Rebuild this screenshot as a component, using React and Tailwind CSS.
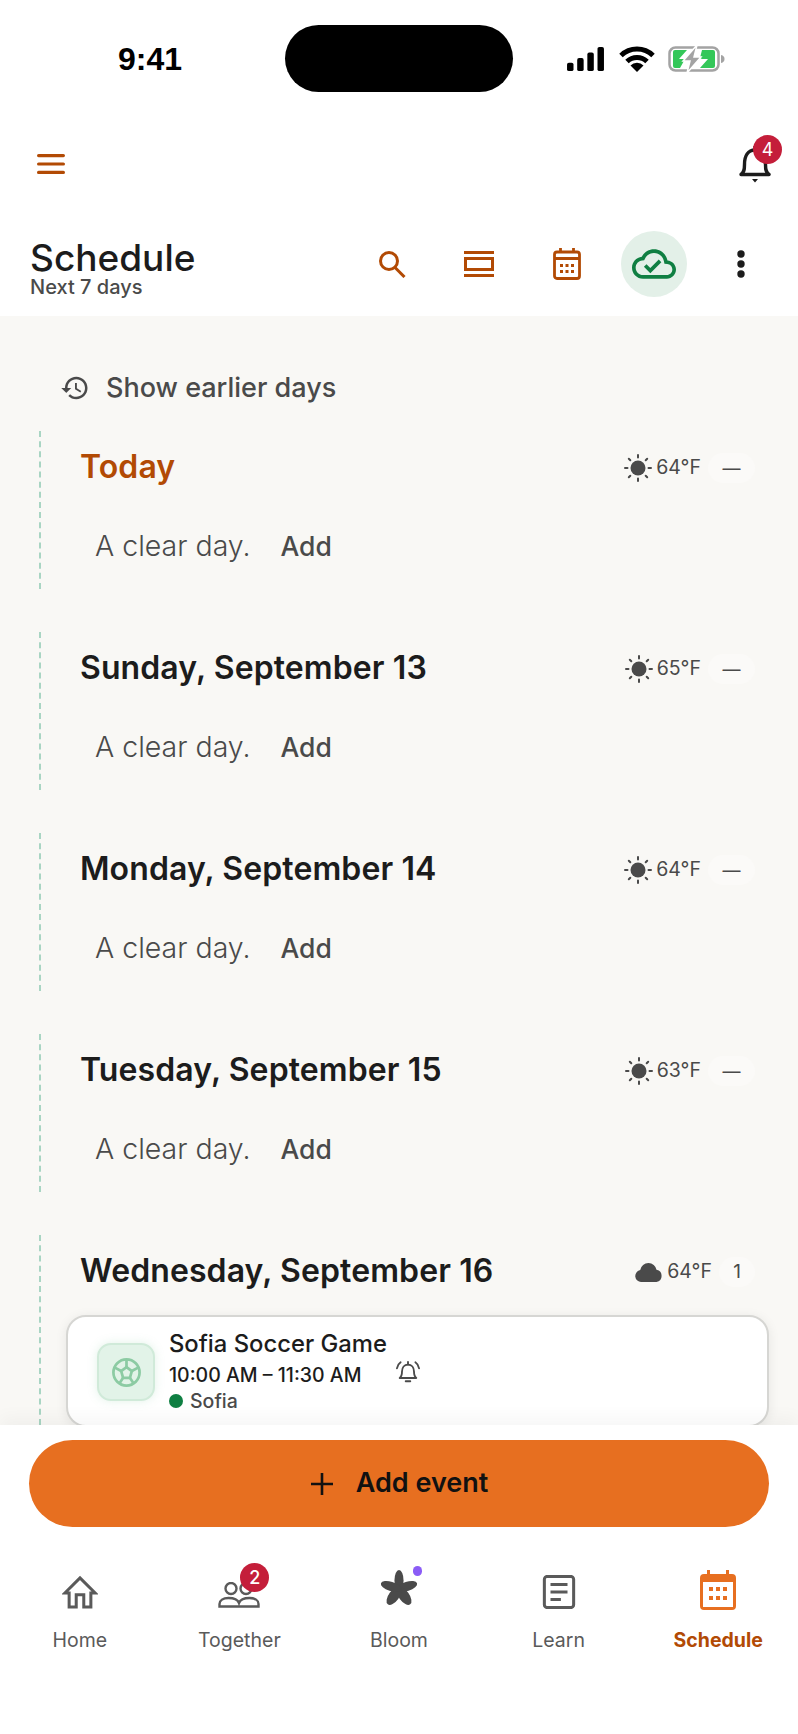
import React from "react";

const Sun = () => (
  <svg viewBox="0 0 28 28" className="w-[28px] h-[28px]" fill="#4a4a4a">
    <circle cx="14" cy="14" r="7.500" />
    <g stroke="#4a4a4a" strokeWidth="2" strokeLinecap="round">
      <path d="M14 1v2.500M14 24.500V27M1 14h2.500M24.500 14H27M4.800 4.800l1.500 1.500M21.700 21.700l1.500 1.500M4.800 23.200l1.500-1.500M21.700 6.300l1.500-1.500" />
    </g>
  </svg>
);

const Cloud = () => (
  <svg viewBox="0 0 28 20" className="w-[29px] h-[20px]" fill="#4a4a4a">
    <path d="M7 20a6 6 0 0 1-1.300-11.900A8.500 8.500 0 0 1 14 1a8.200 8.200 0 0 1 8 6.800A6.200 6.200 0 0 1 22 20Z" />
  </svg>
);

function Day({ title, temp, today }) {
  return (
    <div className="border-l-2 border-dashed border-[#a9d5c3] ml-[39px] mb-[43px] h-[158px] shrink-0 pl-[39px]">
      <div className="flex items-center justify-between h-[70px] pr-[43px]">
        <div className={`text-[32px] font-semibold tracking-[0.1px] mt-[2px] ${today ? "text-[#b24a04]" : "text-[#1c1c1c]"}`}>{title}</div>
        <div className="flex items-center mt-[4px]">
          <Sun />
          <span className="text-[19.500px] text-[#4a4a4a] ml-[4px] mr-[7px]">{temp}</span>
          <span className="h-[30px] w-[47px] rounded-full bg-[#fbfaf8] flex items-center justify-center text-[18px] text-[#4a4a4a]">—</span>
        </div>
      </div>
      <div className="flex items-center mt-[24px] ml-[15px] text-[28.500px] text-[#4a4a4a]">
        <span className="font-light">A clear day.</span>
        <span className="font-medium text-[26.500px] ml-[30px]">Add</span>
      </div>
    </div>
  );
}

function NavItem({ label, active, children }) {
  return (
    <div className="flex-1 flex flex-col items-center">
      <div className="relative h-[48px] w-[60px] flex items-end justify-center">{children}</div>
      <div className={`mt-[14px] text-[19.500px] ${active ? "text-[#b24a04] font-bold" : "text-[#5a5a5a]"}`}>{label}</div>
    </div>
  );
}

export default function App() {
  return (
    <div className="w-[798px] h-[1734px] flex flex-col bg-white overflow-hidden font-['Inter',sans-serif]">
      {/* status bar */}
      <div className="flex items-center h-[92px] pt-[25px] shrink-0 pl-[118px]">
        <span className="text-[32px] font-bold text-black font-['Liberation_Sans',sans-serif] w-[167px]">9:41</span>
        <div className="w-[228px] h-[67px] bg-black rounded-[34px]" />
        <svg viewBox="0 0 40 26" className="w-[39px] h-[24px] ml-[53px]" fill="#000">
          <rect x="0" y="17" width="7" height="9" rx="2" />
          <rect x="11" y="12" width="7" height="14" rx="2" />
          <rect x="22" y="6" width="7" height="20" rx="2" />
          <rect x="33" y="0" width="7" height="26" rx="2" />
        </svg>
        <svg viewBox="0 0 36 26" className="w-[36px] h-[26px] ml-[14px]" fill="none" stroke="#000" strokeWidth="5">
          <path d="M2 9.500a23 23 0 0 1 32 0M8 15.500a14.500 14.500 0 0 1 20 0" />
          <path d="M18 26l-6.500-6.500a9 9 0 0 1 13 0Z" fill="#000" stroke="none" />
        </svg>
        <svg viewBox="0 0 58 28" className="w-[58px] h-[28px] ml-[13px]">
          <rect x="1.500" y="2.500" width="49" height="23" rx="6" fill="none" stroke="#a3a3a3" strokeWidth="2.500" />
          <path d="M7 5h12l-8 9h6l-5 9H7a2 2 0 0 1-2-2V7a2 2 0 0 1 2-2Z" fill="#34c759" />
          <path d="M34 5h11a2 2 0 0 1 2 2v14a2 2 0 0 1-2 2H32l8-9h-6l-2-1Z" fill="#34c759" />
          <path d="M29 0 15 16h7l-3 12 14-16h-7Z" fill="#a3a3a3" stroke="#fff" strokeWidth="1.500" />
          <path d="M53 10c2.500.6 3.500 2 3.500 4s-1 3.400-3.500 4Z" fill="#a3a3a3" />
        </svg>
      </div>

      {/* top bar */}
      <div className="flex items-center justify-between h-[110px] pt-[34px] pl-[37px] pr-[27px] shrink-0">
        <svg viewBox="0 0 28 20" className="w-[28px] h-[20px]" fill="#b24a04">
          <rect x="0" y="0" width="28" height="3.200" rx="1.600" />
          <rect x="0" y="8.400" width="28" height="3.200" rx="1.600" />
          <rect x="0" y="16.800" width="28" height="3.200" rx="1.600" />
        </svg>
        <div className="relative w-[32px] h-[38px]">
          <svg viewBox="0 0 32 38" className="w-[32px] h-[38px]" fill="none" stroke="#1c1c1c" strokeWidth="3.400">
            <path d="M2 29.500c3-2 3.500-4.500 3.500-10C5.500 11 9 5 16 5s10.500 6 10.500 14.500c0 5.500.5 8 3.500 10Z" strokeLinejoin="round" />
            <path d="M13 34h6l-3 3.500Z" fill="#1c1c1c" stroke="none" />
            <path d="M16 1v4" />
          </svg>
          <span className="absolute left-[14px] top-[-10px] w-[29px] h-[29px] rounded-full bg-[#c41e3a] text-white text-[18px] flex items-center justify-center">4</span>
        </div>
      </div>

      {/* header */}
      <div className="flex items-center justify-between h-[114px] pt-[10px] pl-[30px] pr-[53px] shrink-0">
        <div className="flex flex-col mt-[5px]">
          <div className="text-[37px] leading-[41px] font-medium text-[#1c1c1c]">Schedule</div>
          <div className="text-[20px] leading-[19px] font-medium text-[#4a4a4a]">Next 7 days</div>
        </div>
        <div className="flex items-center">
          <svg viewBox="0 0 28 28" className="w-[28px] h-[28px] mr-[58px]" fill="none" stroke="#b24a04" strokeWidth="3">
            <circle cx="11" cy="11" r="8.500" />
            <path d="M17 17.500 26.500 27" />
          </svg>
          <svg viewBox="0 0 30 26" className="w-[30px] h-[26px] mr-[59px]" fill="none" stroke="#b24a04" strokeWidth="3">
            <path d="M0 1.500h30M0 24.500h30" />
            <rect x="1.500" y="7.500" width="27" height="11" />
          </svg>
          <svg viewBox="0 0 28 32" className="w-[28px] h-[32px] mr-[40px]" fill="none" stroke="#b24a04" strokeWidth="2.800">
            <rect x="1.500" y="4" width="25" height="26.500" rx="2.500" />
            <path d="M1.500 10.500h25M7.500 0v4M20.500 0v4" />
            <path d="M7 16h3v3H7zM12.500 16h3v3h-3zM18 16h3v3h-3zM7 22h3v3H7zM12.500 22h3v3h-3zM18 22h3v3h-3z" fill="#b24a04" stroke="none" />
          </svg>
          <div className="w-[66px] h-[66px] rounded-full bg-[#e3f0e8] flex items-center justify-center mr-[50px]">
            <svg viewBox="0 0 24 24" className="w-[44px] h-[44px]" fill="#0f7f42">
              <path d="M19.350 10.040C18.670 6.590 15.640 4 12 4 9.110 4 6.600 5.640 5.350 8.040 2.340 8.360 0 10.910 0 14c0 3.310 2.690 6 6 6h13c2.760 0 5-2.240 5-5 0-2.640-2.050-4.780-4.650-4.960zM19 18H6c-2.210 0-4-1.790-4-4 0-2.050 1.530-3.760 3.560-3.970l1.070-.11.5-.95C8.080 7.140 9.940 6 12 6c2.620 0 4.880 1.860 5.390 4.430l.3 1.500 1.530.11c1.560.1 2.780 1.410 2.780 2.960 0 1.650-1.350 3-3 3zm-9-3.820l-2.090-2.090L6.500 13.500 10 17l6.010-6.010-1.410-1.410z" />
            </svg>
          </div>
          <svg viewBox="0 0 8 28" className="w-[8px] h-[28px]" fill="#1c1c1c">
            <circle cx="4" cy="4" r="3.700" />
            <circle cx="4" cy="14" r="3.700" />
            <circle cx="4" cy="24" r="3.700" />
          </svg>
        </div>
      </div>

      {/* list */}
      <div className="flex-1 min-h-0 overflow-hidden bg-[#f9f8f5] flex flex-col">
        <div className="flex items-center pl-[60px] pt-[29px] h-[115px] shrink-0 text-[27px] font-medium text-[#4a4a4a]">
          <svg viewBox="0 0 24 24" className="w-[30px] h-[30px] mr-[16px]" fill="#4a4a4a">
            <path d="M13 3c-4.970 0-9 4.030-9 9H1l3.890 3.890.07.14L9 12H6c0-3.870 3.130-7 7-7s7 3.130 7 7-3.130 7-7 7c-1.930 0-3.680-.79-4.940-2.060l-1.420 1.420C8.270 19.990 10.510 21 13 21c4.970 0 9-4.030 9-9s-4.030-9-9-9zm-1 5v5l4.280 2.540.72-1.210-3.500-2.080V8H12z" />
          </svg>
          Show earlier days
        </div>
        <Day title="Today" temp="64°F" today />
        <Day title="Sunday, September 13" temp="65°F" />
        <Day title="Monday, September 14" temp="64°F" />
        <Day title="Tuesday, September 15" temp="63°F" />
        <div className="border-l-2 border-dashed border-[#a9d5c3] ml-[39px] pl-[25px] shrink-0 h-[190px]">
          <div className="flex items-center justify-between h-[70px] pl-[14px] pr-[43px]">
            <div className="text-[32px] font-semibold tracking-[0.1px] mt-[2px] text-[#1c1c1c]">Wednesday, September 16</div>
            <div className="flex items-center mt-[4px]">
              <Cloud />
              <span className="text-[19.500px] text-[#4a4a4a] ml-[4px] mr-[7px]">64°F</span>
              <span className="h-[30px] w-[36px] rounded-full bg-[#fbfaf8] flex items-center justify-center text-[19px] text-[#4a4a4a]">1</span>
            </div>
          </div>
          <div className="mt-[10px] w-[703px] h-[112px] bg-white rounded-[20px] border-2 border-[#d6d6d3] shadow-[0_2px_12px_rgba(0,0,0,0.08)] flex items-start pl-[29px] pt-[11px]">
            <div className="w-[58px] h-[58px] mt-[15px] rounded-[14px] bg-[#e2f3e8] border-2 border-[#d0ead9] shadow-[0_0_10px_rgba(140,203,163,0.25)] flex items-center justify-center">
              <svg viewBox="0 0 32 32" className="w-[31px] h-[31px]" fill="none" stroke="#8ccba3" strokeWidth="2.800">
                <circle cx="16" cy="16" r="13.500" />
                <path d="M16 10.500 21.500 14.500 19.500 21.500H12.500L10.500 14.500Z" />
                <path d="M16 3v7.500M21.500 14.500 28 11M19.500 21.500l4 6M12.500 21.500l-4 6M10.500 14.500 4 11" />
              </svg>
            </div>
            <div className="ml-[14px] flex flex-col">
              <div className="text-[23.800px] leading-[32px] font-medium text-[#1c1c1c]">Sofia Soccer Game</div>
              <div className="flex items-center text-[19.500px] leading-[31px] font-medium text-[#1c1c1c]">
                <span>10:00 AM – 11:30 AM</span>
                <svg viewBox="0 0 26 26" className="w-[24px] h-[24px] ml-[35px] -mt-[8px]" fill="none" stroke="#4a4a4a" strokeWidth="2">
                  <path d="M4 19.500c2-1.500 2.500-3 2.500-7C6.500 8 9 5 13 5s6.500 3 6.500 7.500c0 4 .5 5.500 2.500 7Z" strokeLinejoin="round" />
                  <path d="M13 2v3M10.500 23h5M1 9c.5-3 1.800-5 4-6.500M25 9c-.5-3-1.800-5-4-6.500" strokeLinecap="round" />
                </svg>
              </div>
              <div className="flex items-center text-[19.500px] leading-[20px] font-medium text-[#4a4a4a]">
                <span className="w-[14px] h-[14px] rounded-full bg-[#0f7f42] mr-[7px]" />
                Sofia
              </div>
            </div>
          </div>
        </div>
      </div>

      {/* bottom */}
      <div className="h-[309px] shrink-0 bg-white flex flex-col relative shadow-[0_-8px_16px_rgba(0,0,0,0.035)]">
        <div className="mx-[29px] mt-[15px] h-[87px] rounded-[44px] bg-[#e76f20] flex items-center justify-center gap-[22px] text-[27px] font-semibold text-[#111] shrink-0">
          <svg viewBox="0 0 24 24" className="w-[24px] h-[24px]" fill="none" stroke="#111" strokeWidth="2.600">
            <path d="M12 1v22M1 12h22" />
          </svg>
          Add event
        </div>
        <div className="flex mt-[37px]">
          <NavItem label="Home">
            <svg viewBox="0 0 36 36" className="w-[36px] h-[34px] mb-[3px]" fill="none" stroke="#5a5a5a" strokeWidth="3.200">
              <path d="M2 19 18 3l16 16h-4.500v15H22V21h-8v13H6.500V19Z" strokeLinejoin="miter" />
            </svg>
          </NavItem>
          <NavItem label="Together">
            <svg viewBox="0 0 42 26" className="w-[42px] h-[26px] mb-[4px]" fill="none" stroke="#5a5a5a" strokeWidth="2.400">
              <ellipse cx="13" cy="6.500" rx="5.500" ry="5.500" />
              <ellipse cx="28" cy="6.500" rx="5.500" ry="5.500" />
              <path d="M1.500 24.500V22c0-3.500 3.500-6 9-6 4.500 0 9 1 10.500 5 1.500-4 6-5 10.500-5 5.500 0 9 2.500 9 6v2.500Z" />
            </svg>
            <span className="absolute left-[31px] top-[-1px] w-[29px] h-[29px] rounded-full bg-[#c41e3a] text-white text-[18px] font-medium flex items-center justify-center">2</span>
          </NavItem>
          <NavItem label="Bloom">
            <svg viewBox="0 0 40 40" className="w-[40px] h-[38px] mb-[4px]" fill="#4a4a4a">
              <ellipse cx="20" cy="11" rx="4.800" ry="11" />
              <ellipse cx="20" cy="11" rx="4.800" ry="11" transform="rotate(72 20 20)" />
              <ellipse cx="20" cy="11" rx="5.500" ry="11" transform="rotate(144 20 20)" />
              <ellipse cx="20" cy="11" rx="5.500" ry="11" transform="rotate(216 20 20)" />
              <ellipse cx="20" cy="11" rx="4.800" ry="11" transform="rotate(288 20 20)" />
            </svg>
            <span className="absolute left-[44px] top-[2px] w-[9px] h-[10px] rounded-full bg-[#8b5cf6]" />
          </NavItem>
          <NavItem label="Learn">
            <svg viewBox="0 0 34 36" className="w-[34px] h-[34px] mb-[3px]" fill="none" stroke="#5a5a5a" strokeWidth="3.200">
              <rect x="1.500" y="1.500" width="31" height="33" rx="3" />
              <path d="M8 10h18M8 18h18M8 26h11" />
            </svg>
          </NavItem>
          <NavItem label="Schedule" active>
            <svg viewBox="0 0 36 40" className="w-[36px] h-[40px] mb-[2px]">
              <path d="M7 0h3v4h16V0h3v4h3a4 4 0 0 1 4 4v28a4 4 0 0 1-4 4H4a4 4 0 0 1-4-4V8a4 4 0 0 1 4-4h3Z" fill="#e76f20" />
              <rect x="3" y="12" width="30" height="25" fill="#fff" />
              <path d="M9 17h4v4H9zM16 17h4v4h-4zM23 17h4v4h-4zM9 26h4v4H9zM16 26h4v4h-4zM23 26h4v4h-4z" fill="#e76f20" />
            </svg>
          </NavItem>
        </div>
      </div>
    </div>
  );
}
